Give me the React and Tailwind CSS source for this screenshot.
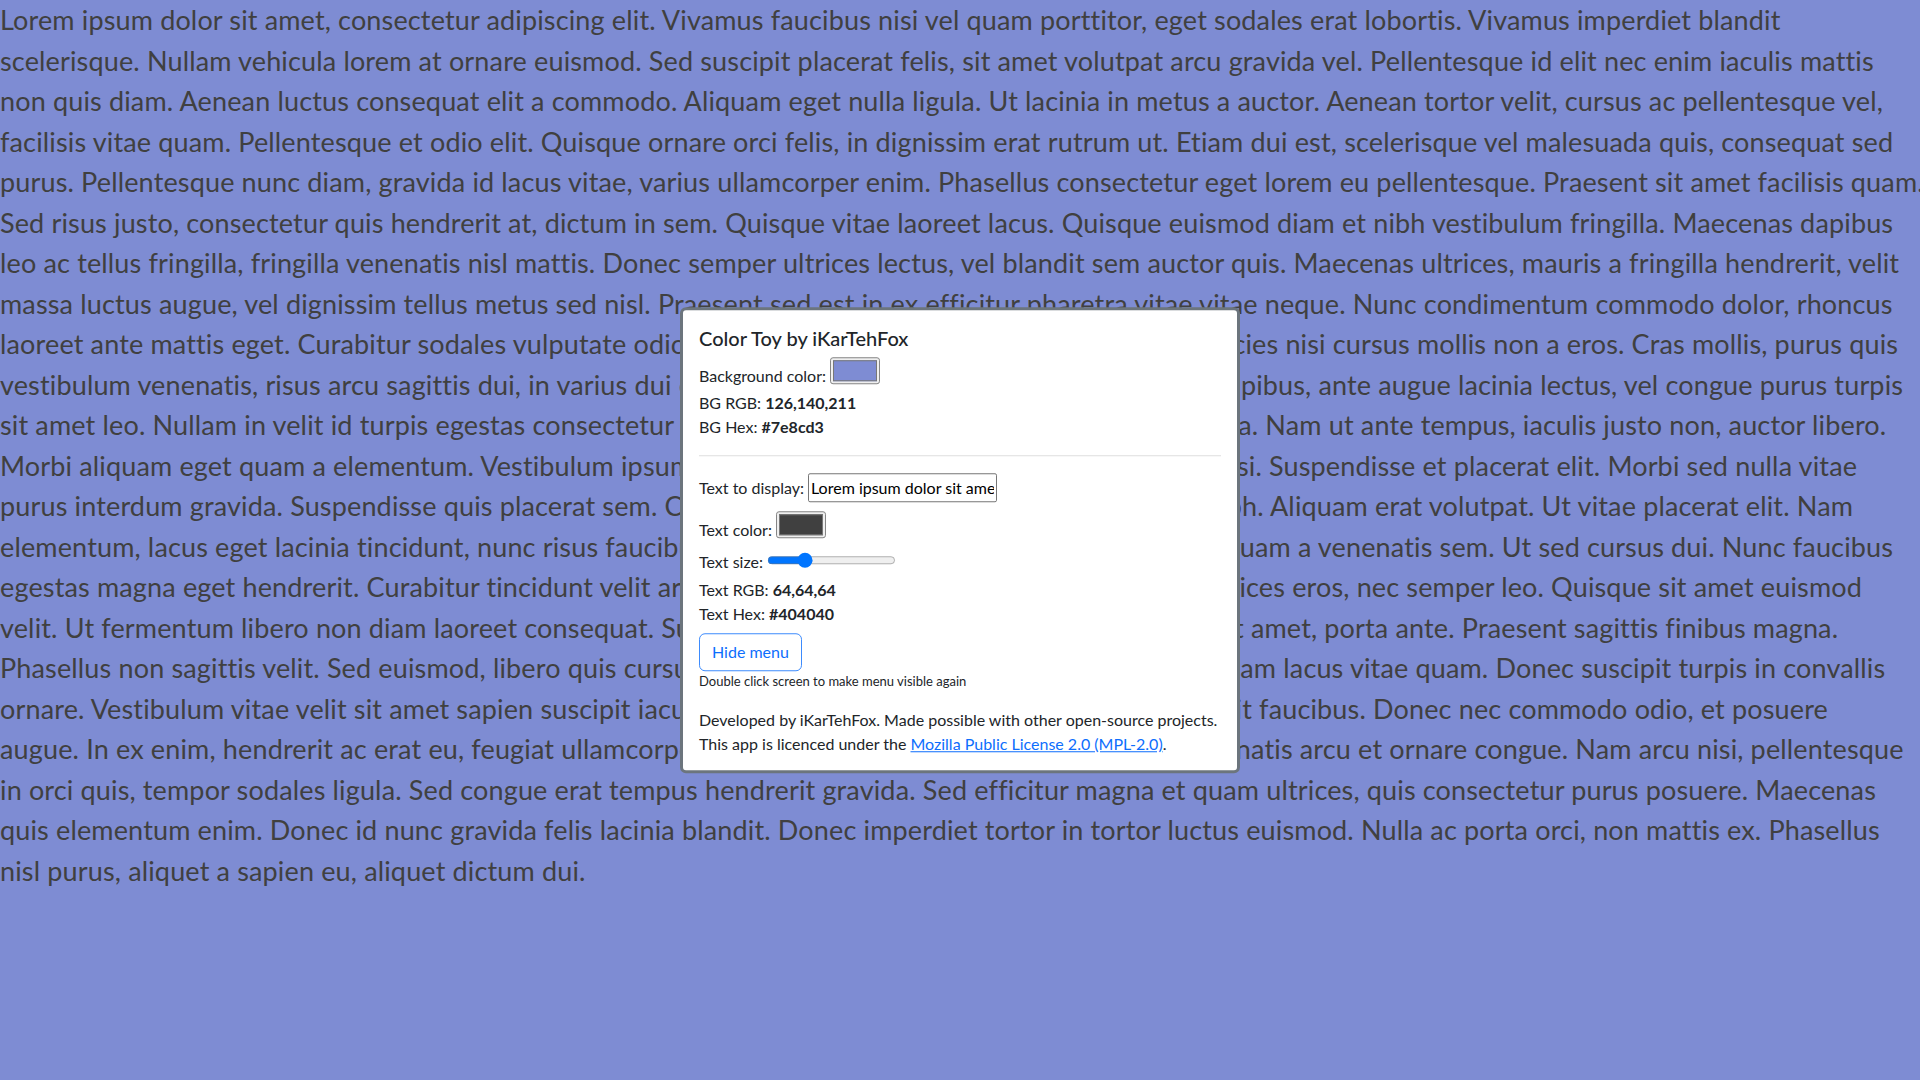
import React, { useState } from "react";

const lines = [
  "Lorem ipsum dolor sit amet, consectetur adipiscing elit. Vivamus faucibus nisi vel quam porttitor, eget sodales erat lobortis. Vivamus imperdiet blandit",
  "scelerisque. Nullam vehicula lorem at ornare euismod. Sed suscipit placerat felis, sit amet volutpat arcu gravida vel. Pellentesque id elit nec enim iaculis mattis",
  "non quis diam. Aenean luctus consequat elit a commodo. Aliquam eget nulla ligula. Ut lacinia in metus a auctor. Aenean tortor velit, cursus ac pellentesque vel,",
  "facilisis vitae quam. Pellentesque et odio elit. Quisque ornare orci felis, in dignissim erat rutrum ut. Etiam dui est, scelerisque vel malesuada quis, consequat sed",
  "purus. Pellentesque nunc diam, gravida id lacus vitae, varius ullamcorper enim. Phasellus consectetur eget lorem eu pellentesque. Praesent sit amet facilisis quam.",
  "Sed risus justo, consectetur quis hendrerit at, dictum in sem. Quisque vitae laoreet lacus. Quisque euismod diam et nibh vestibulum fringilla. Maecenas dapibus",
  "leo ac tellus fringilla, fringilla venenatis nisl mattis. Donec semper ultrices lectus, vel blandit sem auctor quis. Maecenas ultrices, mauris a fringilla hendrerit, velit",
  "massa luctus augue, vel dignissim tellus metus sed nisl. Praesent sed est in ex efficitur pharetra vitae vitae neque. Nunc condimentum commodo dolor, rhoncus",
  "laoreet ante mattis eget. Curabitur sodales vulputate odio, in tincidunt nibh viverra a lorem. Integer ultricies nisi cursus mollis non a eros. Cras mollis, purus quis",
  "vestibulum venenatis, risus arcu sagittis dui, in varius dui erat a mauris. Mauris sed ligula ac metus leo dapibus, ante augue lacinia lectus, vel congue purus turpis",
  "sit amet leo. Nullam in velit id turpis egestas consectetur sed quis eros. Aenean at dolor eget nulla viverra. Nam ut ante tempus, iaculis justo non, auctor libero.",
  "Morbi aliquam eget quam a elementum. Vestibulum ipsum ligula, posuere at dictum nunc, tincidunt et nisi. Suspendisse et placerat elit. Morbi sed nulla vitae",
  "purus interdum gravida. Suspendisse quis placerat sem. Curabitur vel lectus eu nisl rutrum faucibus a nibh. Aliquam erat volutpat. Ut vitae placerat elit. Nam",
  "elementum, lacus eget lacinia tincidunt, nunc risus faucibus urna, vitae tristique purus nisi, mauris et aliquam a venenatis sem. Ut sed cursus dui. Nunc faucibus",
  "egestas magna eget hendrerit. Curabitur tincidunt velit arcu, a molestie tortor pretium quis et. Fusce ultrices eros, nec semper leo. Quisque sit amet euismod",
  "velit. Ut fermentum libero non diam laoreet consequat. Suspendisse potenti. Duis interdum risus, sem sit amet, porta ante. Praesent sagittis finibus magna.",
  "Phasellus non sagittis velit. Sed euismod, libero quis cursus ornare, lorem ac nisl tempor mauris, vel aliquam lacus vitae quam. Donec suscipit turpis in convallis",
  "ornare. Vestibulum vitae velit sit amet sapien suscipit iaculis. Fusce eget orci ut lorem, id semper a blandit faucibus. Donec nec commodo odio, et posuere",
  "augue. In ex enim, hendrerit ac erat eu, feugiat ullamcorper lectus. Morbi vel nibh et lectus dictum, venenatis arcu et ornare congue. Nam arcu nisi, pellentesque",
  "in orci quis, tempor sodales ligula. Sed congue erat tempus hendrerit gravida. Sed efficitur magna et quam ultrices, quis consectetur purus posuere. Maecenas",
  "quis elementum enim. Donec id nunc gravida felis lacinia blandit. Donec imperdiet tortor in tortor luctus euismod. Nulla ac porta orci, non mattis ex. Phasellus",
  "nisl purus, aliquet a sapien eu, aliquet dictum dui."
];

const defaultText = lines.join(" ");

function toRgb(hex) {
  const n = parseInt(hex.slice(1), 16);
  return [(n >> 16) & 255, (n >> 8) & 255, n & 255].join(",");
}

function Swatch({ value, onChange }) {
  return (
    <input
      type="color"
      value={value}
      onChange={(e) => onChange(e.target.value)}
      className="ml-1 h-[27px] w-[50px] shrink-0 cursor-pointer rounded-[3px] border border-[#858585] bg-[#efefef] p-[2px] [&::-webkit-color-swatch-wrapper]:p-0 [&::-webkit-color-swatch]:border-[#777]"
    />
  );
}

export default function App() {
  const [bg, setBg] = useState("#7e8cd3");
  const [fg, setFg] = useState("#404040");
  const [size, setSize] = useState(27);
  const [text, setText] = useState(defaultText);
  const [menuOpen, setMenuOpen] = useState(true);

  return (
    <div
      className="relative min-h-screen overflow-hidden font-['Lato','Noto_Sans',sans-serif]"
      style={{ backgroundColor: bg }}
      onDoubleClick={() => setMenuOpen(true)}
    >
      <p
        className={text === defaultText ? "whitespace-nowrap tracking-[0.0056em]" : "break-words tracking-[0.0056em]"}
        style={{ color: fg, fontSize: size, lineHeight: 1.5 }}
      >
        {text === defaultText
          ? lines.map((line, i) => (
              <span key={i} className="block">
                {line}
              </span>
            ))
          : text}
      </p>

      {menuOpen && (
        <div className="fixed left-1/2 top-1/2 w-[560px] -translate-x-1/2 -translate-y-1/2 rounded-md border-[3px] border-[#6c757d] bg-white px-4 pt-4 pb-[14px] text-[16px] leading-6 text-[#212529]">
          <div className="text-[20px] font-medium leading-6">Color Toy by iKarTehFox</div>

          <div className="mt-[7px] flex items-start">
            <span className="mt-[7px]">Background color:</span>
            <Swatch value={bg} onChange={setBg} />
          </div>
          <div className="mt-[3px]">
            BG RGB: <b className="font-bold">{toRgb(bg)}</b>
          </div>
          <div>
            BG Hex: <b className="font-bold">{bg}</b>
          </div>

          <hr className="mt-4 mb-[17px] border-t border-[#dedede]" />

          <div className="flex items-start">
            <span className="mt-[3px]">Text to display:</span>
            <input
              type="text"
              value={text}
              onChange={(e) => setText(e.target.value)}
              className="ml-1 h-[29px] w-[189px] rounded-[2px] border border-[#767676] px-[2px] leading-6 text-black outline-none"
            />
          </div>
          <div className="mt-[9px] flex items-start">
            <span className="mt-[7px]">Text color:</span>
            <Swatch value={fg} onChange={setFg} />
          </div>
          <div className="mt-2 flex items-start">
            <span>Text size:</span>
            <input
              type="range"
              min={0}
              max={100}
              value={size}
              onChange={(e) => setSize(Number(e.target.value))}
              className="ml-1 mt-[2px] h-4 w-[129px]"
            />
          </div>
          <div className="mt-1">
            Text RGB: <b className="font-bold">{toRgb(fg)}</b>
          </div>
          <div>
            Text Hex: <b className="font-bold">{fg}</b>
          </div>

          <button
            type="button"
            onClick={() => setMenuOpen(false)}
            className="mt-[7px] h-[38px] rounded-md border border-[#3d8bfd] px-3 text-[#0d6efd] hover:bg-[#0d6efd] hover:text-white"
          >
            Hide menu
          </button>
          <div className="mt-px text-[13px] leading-[19.5px]">Double click screen to make menu visible again</div>

          <div className="mt-4">Developed by iKarTehFox. Made possible with other open-source projects.</div>
          <div>
            This app is licenced under the{" "}
            <a href="#mpl" className="text-[#0d6efd] underline">
              Mozilla Public License 2.0 (MPL-2.0)
            </a>
            .
          </div>
        </div>
      )}
    </div>
  );
}
